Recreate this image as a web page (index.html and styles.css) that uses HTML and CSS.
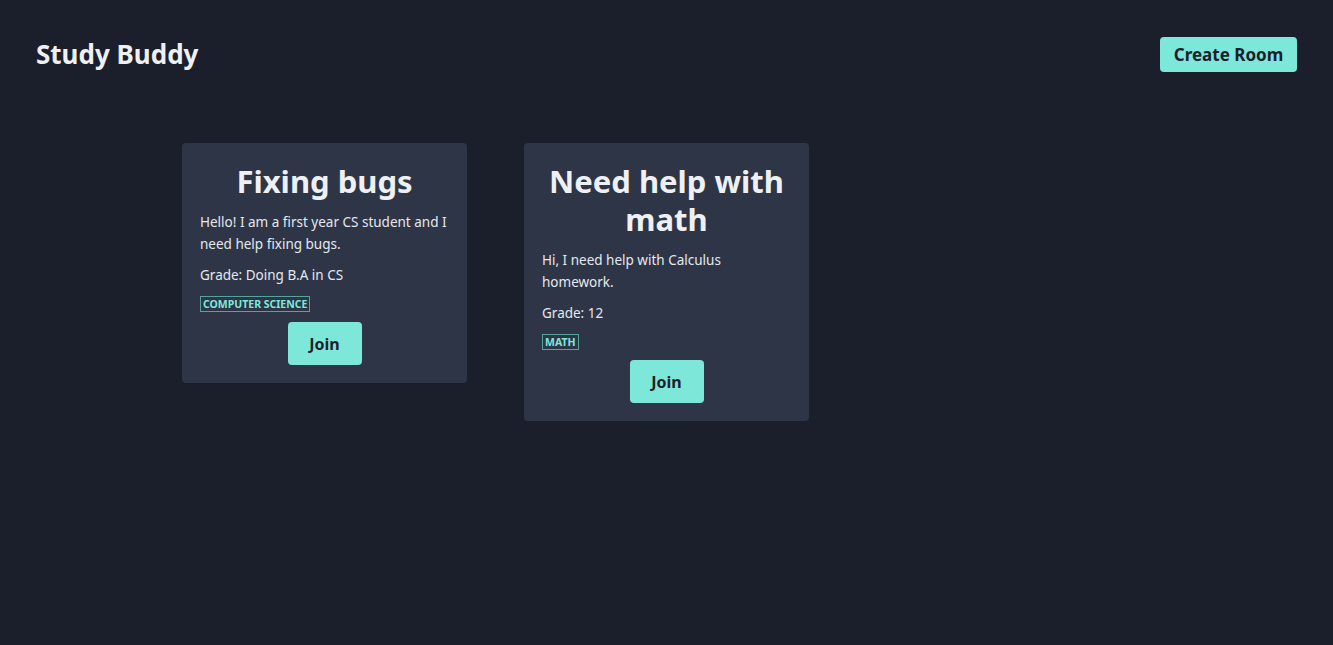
FILE: index.html
```html
<!DOCTYPE html>
<html lang="en">
<head>
  <meta charset="UTF-8" />
  <meta name="viewport" content="width=device-width, initial-scale=1.0">
  <title>Study Buddy</title>
  <link rel="stylesheet" href="styles.css">
</head>
<body>
  <header class="topbar">
    <h1 class="logo">Study Buddy</h1>
    <button class="btn btn-create">Create Room</button>
  </header>

  <main class="rooms">
    <div class="room-card">
      <h2 class="room-title">Fixing bugs</h2>
      <p class="room-desc">Hello! I am a first year CS student and I need help fixing bugs.</p>
      <p class="room-grade">Grade: Doing B.A in CS</p>
      <span class="tag">Computer Science</span>
      <button class="btn btn-join">Join</button>
    </div>
    <div class="room-card">
      <h2 class="room-title">Need help with math</h2>
      <p class="room-desc">Hi, I need help with Calculus homework.</p>
      <p class="room-grade">Grade: 12</p>
      <span class="tag">Math</span>
      <button class="btn btn-join">Join</button>
    </div>
  </main>
</body>
</html>
```

FILE: styles.css
```css
body {
  margin: 0;
  background: #1b1f2b;
  color: #e6e8ee;
  font-family: "Noto Sans", "Open Sans", sans-serif;
}

.topbar {
  display: flex;
  justify-content: space-between;
  align-items: center;
  padding: 36px;
}

.logo {
  margin: 0;
  font-size: 26px;
  font-weight: 700;
  color: #eef0f4;
}

.btn {
  background: #7de8da;
  color: #1b1f2b;
  border: none;
  border-radius: 4px;
  font-family: inherit;
  font-weight: 700;
  cursor: pointer;
}

.btn-create {
  width: 137px;
  height: 35px;
  font-size: 17px;
  padding: 0;
}

.rooms {
  display: grid;
  grid-template-columns: repeat(3, 285px);
  gap: 57px;
  width: 969px;
  margin: 35px auto 0;
  align-items: start;
}

.room-card {
  background: #2d3547;
  border-radius: 4px;
  padding: 19px 18px 18px;
  display: flex;
  flex-direction: column;
  align-items: flex-start;
}

.room-title {
  align-self: stretch;
  margin: 0 0 11px;
  font-size: 31px;
  line-height: 38px;
  text-align: center;
  color: #eef0f4;
}

.room-desc,
.room-grade {
  margin: 0 0 9px;
  font-size: 13.5px;
  line-height: 22px;
}

.tag {
  margin-top: 1px;
  border: 1px solid #55a49c;
  color: #7de8da;
  font-size: 10.5px;
  font-weight: 700;
  text-transform: uppercase;
  padding: 0 2px;
  line-height: 14px;
}

.btn-join {
  align-self: center;
  margin-top: 10px;
  width: 74px;
  height: 43px;
  font-size: 16px;
}
```
